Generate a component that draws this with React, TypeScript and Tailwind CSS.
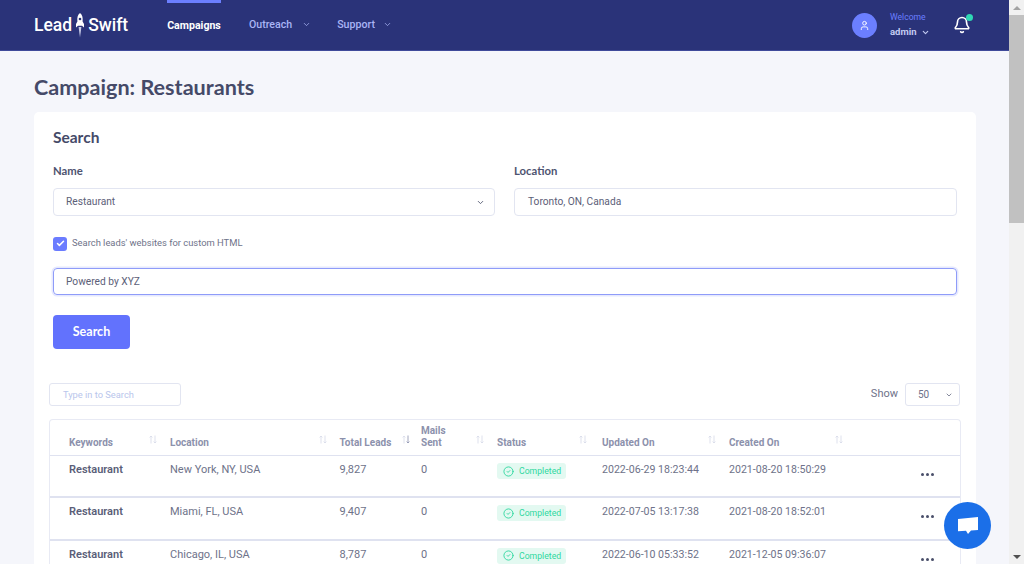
import { Bell, Check, ChevronDown, CircleCheck, User } from "lucide-react";

const rows = [
  { location: "New York, NY, USA", leads: "9,827", updated: "2022-06-29 18:23:44", created: "2021-08-20 18:50:29" },
  { location: "Miami, FL, USA", leads: "9,407", updated: "2022-07-05 13:17:38", created: "2021-08-20 18:52:01" },
  { location: "Chicago, IL, USA", leads: "8,787", updated: "2022-06-10 05:33:52", created: "2021-12-05 09:36:07" },
];

const SortArrows = ({ dark }: { dark?: boolean }) => (
  <svg width="8" height="9" viewBox="0 0 8 9" fill="none" className="mb-[4px] shrink-0">
    <path d="M2 8.5V1M.6 2.4 2 1l1.4 1.4" stroke="#d5d9e8" strokeWidth="0.8" />
    <path d="M6 .5V8M4.6 6.6 6 8l1.4-1.4" stroke={dark ? "#8a90ad" : "#d5d9e8"} strokeWidth="0.8" />
  </svg>
);

const Rocket = () => (
  <svg width="10" height="25" viewBox="0 0 10 25" className="mx-[3px]">
    <path d="M5 0C7.4 2 8 4.6 7.6 8.5L9 11v3.4L7 12.8H3L1 14.4V11l1.4-2.5C2 4.6 2.6 2 5 0Z" fill="#fff" />
    <circle cx="5" cy="6" r="1.3" fill="#2a3379" />
    <path d="M3.6 14h2.8L5 24.5Z" fill="#c7cbe6" />
  </svg>
);

const Scrollbar = () => (
  <div className="flex h-full w-[15px] shrink-0 flex-col bg-[#f1f1f1]">
    <div className="flex h-[15px] items-center justify-center">
      <div className="h-0 w-0 border-x-[4px] border-b-[4px] border-x-transparent border-b-[#a3a3a3]" />
    </div>
    <div className="h-[208px] bg-[#c1c1c1]" />
    <div className="flex-1" />
    <div className="flex h-[15px] items-center justify-center">
      <div className="h-0 w-0 border-x-[4px] border-t-[4px] border-x-transparent border-t-[#505050]" />
    </div>
  </div>
);

const Header = () => (
  <header className="flex h-[51px] shrink-0 items-center border-b border-[#3f4a9a] bg-[#2a3379] pl-[34px] pr-[38px]">
    <div className="flex w-[133px] items-center text-[17.5px] font-medium text-white">
      <span>Lead</span>
      <Rocket />
      <span>Swift</span>
    </div>
    <nav className="flex h-full items-center text-[10.6px] font-medium text-[#a9b5f5]">
      <div className="flex h-full w-[54px] items-center justify-center whitespace-nowrap border-t-[3px] border-[#6b7fff] pb-[1px] font-bold text-white">
        Campaigns
      </div>
      <div className="ml-[28px] flex items-center">
        Outreach
        <ChevronDown size={9} className="ml-[10px]" />
      </div>
      <div className="ml-[26px] flex items-center">
        Support
        <ChevronDown size={9} className="ml-[8px]" />
      </div>
    </nav>
    <div className="ml-auto flex items-center">
      <div className="flex h-[25px] w-[25px] items-center justify-center rounded-full bg-[#6b7fff]">
        <User size={11} className="text-white" />
      </div>
      <div className="ml-[13px] flex w-[63px] flex-col gap-[3px]">
        <span className="text-[8.6px] leading-[11px] text-[#6b7fff]">Welcome</span>
        <span className="flex items-center text-[9.5px] font-bold leading-[12px] text-[#c4cbf2]">
          admin
          <ChevronDown size={9} strokeWidth={3} className="ml-[4px]" />
        </span>
      </div>
      <div className="relative">
        <Bell size={18} strokeWidth={2.2} className="text-white" />
        <div className="absolute -right-[2px] -top-[2px] h-[7px] w-[7px] rounded-full bg-[#2fd8b4]" />
      </div>
    </div>
  </header>
);

const SearchForm = () => (
  <section className="h-[254px] px-[19px] pt-[16px]">
    <h2 className="font-['Lato',sans-serif] text-[15.5px] font-bold leading-[18px] text-[#454a68]">Search</h2>
    <div className="mt-[18px] grid grid-cols-[442px_443px] gap-x-[19px]">
      <div>
        <div className="font-['Lato',sans-serif] text-[11.3px] font-bold leading-[14px] text-[#4e5370]">Name</div>
        <div className="mt-[10px] flex h-[28px] items-center justify-between rounded-[4px] border border-[#e2e5f1] pl-[12px] pr-[9px] text-[10.2px] text-[#5c6078]">
          Restaurant
          <ChevronDown size={9} strokeWidth={2.5} />
        </div>
      </div>
      <div>
        <div className="font-['Lato',sans-serif] text-[11.3px] font-bold leading-[14px] text-[#4e5370]">Location</div>
        <div className="mt-[10px] flex h-[28px] items-center rounded-[4px] border border-[#e2e5f1] pl-[13px] text-[10.2px] text-[#5c6078]">
          Toronto, ON, Canada
        </div>
      </div>
    </div>
    <div className="mt-[21px] flex h-[13px] items-center">
      <div className="flex h-[14px] w-[14px] items-center justify-center rounded-[3px] bg-[#6b7cff]">
        <Check size={9} strokeWidth={4} className="text-white" />
      </div>
      <span className="ml-[5px] text-[9.4px] text-[#6e7289]">Search leads' websites for custom HTML</span>
    </div>
    <div className="mt-[18px] flex h-[27px] items-center rounded-[4px] border border-[#8f9cf9] pl-[12px] text-[10.2px] text-[#5c6078] shadow-[0_0_0_1.5px_#e6e9fe]">
      Powered by XYZ
    </div>
    <button className="mt-[20px] block h-[34px] w-[77px] rounded-[4px] bg-[#6272fd] font-['Lato',sans-serif] text-[12.5px] font-bold text-white">
      Search
    </button>
  </section>
);

const LeadsTable = () => (
  <div className="mt-[36px] rounded-t-[4px] border-x border-t border-[#e8eaf4]">
    <div className="flex h-[36px] items-end border-b border-[#dfe2f0] pb-[7px] pl-[19px] text-[10px] font-bold leading-[11.5px] text-[#8c91ac]">
      <div className="flex w-[101px] items-end justify-between pr-[13px]">Keywords<SortArrows /></div>
      <div className="flex w-[169.5px] items-end justify-between pr-[13px]">Location<SortArrows /></div>
      <div className="flex w-[81.5px] items-end justify-between pr-[11px]">Total Leads<SortArrows dark /></div>
      <div className="flex w-[76px] items-end justify-between pr-[13px]"><span>Mails<br />Sent</span><SortArrows /></div>
      <div className="flex w-[105px] items-end justify-between pr-[15px]">Status<SortArrows /></div>
      <div className="flex w-[127px] items-end justify-between pr-[13px]">Updated On<SortArrows /></div>
      <div className="flex w-[127px] items-end justify-between pr-[13px]">Created On<SortArrows /></div>
    </div>
    {rows.map((row) => (
      <div key={row.location} className="flex h-[42.33px] border-b-2 border-[#dfe2f0] pl-[19px] pt-[7px] text-[11px] leading-[14px] text-[#6e7289]">
        <div className="w-[101px] font-semibold text-[#5a5e78]">Restaurant</div>
        <div className="w-[169.5px]">{row.location}</div>
        <div className="w-[81.5px]">{row.leads}</div>
        <div className="w-[76px]">0</div>
        <div className="w-[105px]">
          <span className="inline-flex h-[16px] w-[69px] items-center gap-[5px] rounded-[3px] bg-[#e3f9f1] pl-[6px] text-[8.7px] text-[#2fd8a0]">
            <CircleCheck size={11} />
            Completed
          </span>
        </div>
        <div className="w-[127px] text-[10.6px]">{row.updated}</div>
        <div className="w-[127px] whitespace-nowrap text-[10.6px]">{row.created}</div>
        <div className="ml-[65px] mt-[10px] flex h-[3px] gap-[2px]">
          <i className="h-[3px] w-[3px] rounded-full bg-[#4a4f6a]" />
          <i className="h-[3px] w-[3px] rounded-full bg-[#4a4f6a]" />
          <i className="h-[3px] w-[3px] rounded-full bg-[#4a4f6a]" />
        </div>
      </div>
    ))}
  </div>
);

const ChatBubble = () => (
  <div className="absolute left-[944px] top-[502px] flex h-[47px] w-[47px] items-center justify-center rounded-full bg-[#1b6fe8]">
    <svg width="22" height="20" viewBox="0 0 22 20">
      <path d="M1 3 21 1v13l-7 .5L11 18l-2-3.2-8 .4Z" fill="#fff" />
    </svg>
  </div>
);

export default function App() {
  return (
    <div className="relative flex h-[564px] w-[1024px] overflow-hidden bg-[#f5f6fb] font-['Roboto',sans-serif]">
      <div className="flex min-w-0 flex-1 flex-col">
        <Header />
        <main className="flex-1 overflow-hidden pl-[34px] pr-[33px]">
          <h1 className="mt-[23px] font-['Lato',sans-serif] text-[21.6px] font-bold leading-[26px] text-[#454a68]">Campaign: Restaurants</h1>
          <div className="mt-[12px] rounded-t-[5px] bg-white pb-[20px]">
            <SearchForm />
            <div className="relative px-[15px] pt-[17px]">
              <div className="absolute left-[15px] top-[17px] flex h-[23px] w-[132px] items-center rounded-[3px] border border-[#e2e5f1] pl-[13px] text-[9.3px] text-[#b9c6ec]">
                Type in to Search
              </div>
              <div className="absolute right-[16px] top-[17px] flex items-center">
                <span className="mr-[7px] text-[11px] text-[#6e7289]">Show</span>
                <div className="flex h-[23px] w-[55px] items-center justify-between rounded-[3px] border border-[#e2e5f1] pl-[12px] pr-[6px] text-[10px] text-[#6e7289]">
                  50
                  <ChevronDown size={8} strokeWidth={2.5} />
                </div>
              </div>
              <LeadsTable />
            </div>
          </div>
        </main>
      </div>
      <Scrollbar />
      <ChatBubble />
    </div>
  );
}
